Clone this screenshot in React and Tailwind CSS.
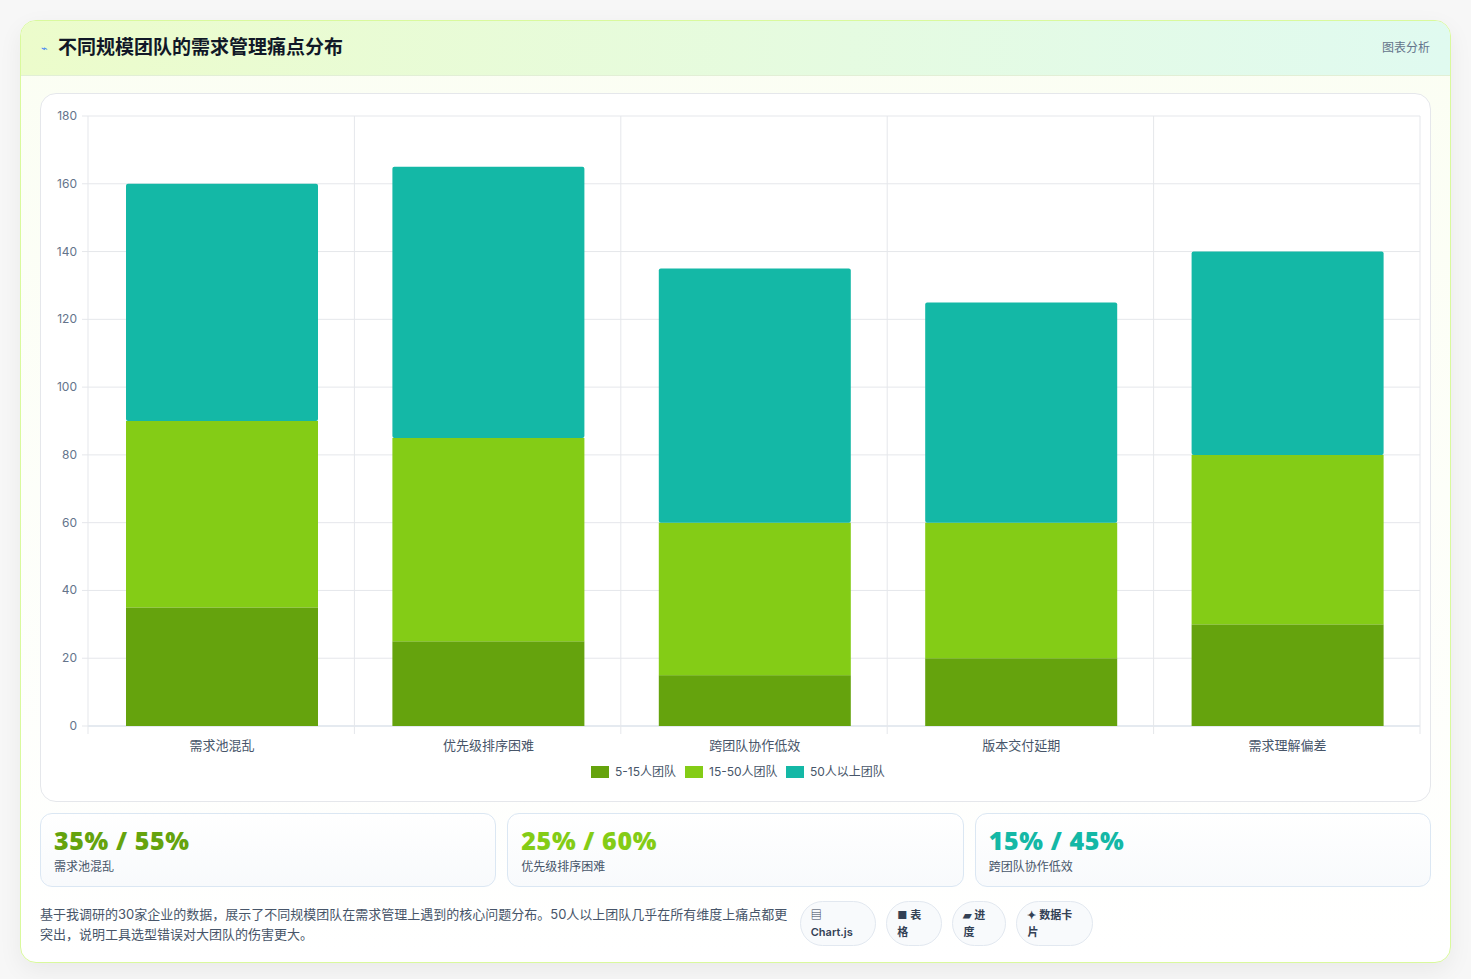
const cats = ["需求池混乱", "优先级排序困难", "跨团队协作低效", "版本交付延期", "需求理解偏差"];
const data = [
  [35, 55, 70],
  [25, 60, 80],
  [15, 45, 75],
  [20, 40, 65],
  [30, 50, 60],
];
const colors = ["#65a30d", "#84cc16", "#14b8a6"];

function Chart() {
  const x0 = 47, x1 = 1379, yTop = 22, yBot = 632;
  const sy = (yBot - yTop) / 180;
  const cw = (x1 - x0) / 5;
  return (
    <svg width="1391" height="707" className="block" style={{ fontFamily: "Inter, 'Noto Sans CJK SC', sans-serif" }}>
      {[0, 20, 40, 60, 80, 100, 120, 140, 160, 180].map((v) => {
        const y = yBot - v * sy;
        return (
          <g key={v}>
            <line x1={x0} x2={x1} y1={y} y2={y} stroke={v === 0 ? "#cbd5e1" : "#e5e7eb"} />
            <line x1={x0 - 6} x2={x0} y1={y} y2={y} stroke="#e5e7eb" />
            <text x={x0 - 11} y={y + 4} textAnchor="end" fontSize="12" fill="#64748b">{v}</text>
          </g>
        );
      })}
      {[0, 1, 2, 3, 4, 5].map((i) => (
        <line key={i} x1={x0 + i * cw} x2={x0 + i * cw} y1={yTop} y2={yBot + 8} stroke="#e5e7eb" />
      ))}
      {data.map((d, i) => {
        let acc = 0;
        const bx = x0 + i * cw + 38;
        return (
          <g key={i}>
            {d.map((v, j) => {
              const yB = yBot - acc * sy;
              acc += v;
              const yT = yBot - acc * sy;
              return <rect key={j} x={bx} y={yT} width={192} height={yB - yT} fill={colors[j]} rx={j === 2 ? 2 : 0} />;
            })}
            <text x={bx + 96} y={656} textAnchor="middle" fontSize="13" fill="#475569">{cats[i]}</text>
          </g>
        );
      })}
      {[["5-15人团队", 550], ["15-50人团队", 644], ["50人以上团队", 745]].map(([t, x], j) => (
        <g key={t}>
          <rect x={x} y={672} width={18} height={12} fill={colors[j]} />
          <text x={x + 24} y={682} fontSize="12" fill="#475569">{t}</text>
        </g>
      ))}
    </svg>
  );
}

const stats = [
  ["35% / 55%", "需求池混乱", "text-[#65a30d]"],
  ["25% / 60%", "优先级排序困难", "text-[#84cc16]"],
  ["15% / 45%", "跨团队协作低效", "text-[#14b8a6]"],
];

export default function App() {
  return (
    <div className="min-h-[979px] bg-[#f7f7f7] p-5" style={{ fontFamily: "Inter, 'Noto Sans CJK SC', sans-serif" }}>
      <div className="overflow-hidden rounded-2xl border border-[#d9f99d] bg-gradient-to-b from-[#fbfef3] to-white shadow-[0_8px_24px_rgba(0,0,0,0.06)]">
        <div className="flex h-[55px] items-center justify-between border-b border-[#e2efd6] bg-gradient-to-r from-[#ecfccb] to-[#e0faf0] px-5">
          <div className="flex items-center gap-2.5">
            <span className="text-[11px] text-[#3b82f6]">⌁</span>
            <h1 className="text-[19px] font-bold text-[#111827]">不同规模团队的需求管理痛点分布</h1>
          </div>
          <span className="text-[12px] text-[#64748b]">图表分析</span>
        </div>
        <div className="px-[19px] pt-[17px] pb-4">
          <div className="rounded-2xl border border-[#e5e7eb] bg-white">
            <Chart />
          </div>
          <div className="mt-[11px] grid grid-cols-3 gap-[11px]">
            {stats.map(([v, l, c]) => (
              <div key={l} className="h-[74px] rounded-xl border border-[#dbe7f3] bg-gradient-to-b from-white to-[#f8fafc] px-[13px] pt-[10px]">
                <div className={`text-[25px] font-extrabold leading-[32px] tracking-wide ${c}`} style={{ fontFamily: "'Open Sans', 'Noto Sans CJK SC', sans-serif" }}>{v}</div>
                <div className="mt-0.5 text-[12px] text-[#475569]">{l}</div>
              </div>
            ))}
          </div>
          <div className="mt-[14px] flex items-center justify-between">
            <p className="w-[770px] text-[13px] leading-5 text-[#475569]">
              基于我调研的30家企业的数据，展示了不同规模团队在需求管理上遇到的核心问题分布。50人以上团队几乎在所有维度上痛点都更突出，说明工具选型错误对大团队的伤害更大。
            </p>
            <div className="mr-[338px] flex gap-[10px]">
              {["▤ Chart.js", "■ 表格", "▰ 进度", "✦ 数据卡片"].map((t) => (
                <span key={t} className="rounded-full border border-[#e2e8f0] bg-[#f8fafc] px-[10px] py-[5px] text-[11px] font-semibold text-[#334155]">{t}</span>
              ))}
            </div>
          </div>
        </div>
      </div>
    </div>
  );
}
